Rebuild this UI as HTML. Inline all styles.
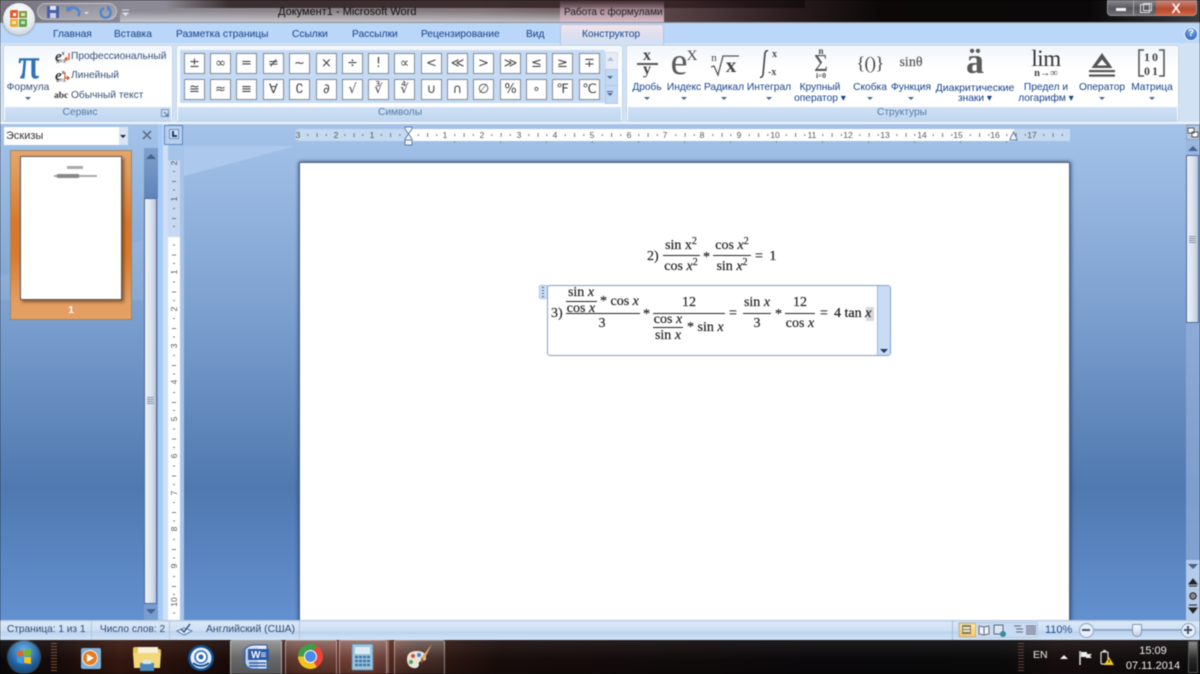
<!DOCTYPE html>
<html lang="ru"><head><meta charset="utf-8"><title>Документ1 - Microsoft Word</title>
<style>
html,body{margin:0;padding:0;background:#000}
#r{position:relative;width:1200px;height:674px;overflow:hidden;font-family:"Liberation Sans","DejaVu Sans",sans-serif;font-size:10.2px;color:#15428b;filter:blur(.45px)}
#r div,#r span,#r svg{position:absolute}
.t{white-space:nowrap;line-height:12px}
.c{white-space:nowrap;line-height:12px;transform:translateX(-50%);text-align:center}
.s{width:19px;height:19px;border:1px solid #7e8a99;background:#fff;text-align:center;line-height:19px;font-size:13px;color:#444;font-family:"DejaVu Sans",sans-serif}
.g{background:linear-gradient(#f1f5fb,#fff 30%);border:1px solid #c3d3e6;border-radius:3px;box-shadow:inset 0 0 0 1px #fff}
.b{background:linear-gradient(#cfe0f4,#c0d7f0);left:1px;right:1px;height:14px;bottom:0}
.a{width:0;height:0;border:3px solid transparent;border-top:3px solid #4a6a92;border-bottom:0}
.m{font-family:"Liberation Serif",serif;font-size:14px;line-height:14px;color:#222;white-space:nowrap;-webkit-text-stroke:.2px #222}
.m i{font-style:italic}
.mc{transform:translateX(-50%);text-align:center}
.l{height:1px;background:#222}
.r{font-size:8.5px;color:#555;line-height:10px;transform:translateX(-50%)}
.v{font-size:8.5px;color:#555;line-height:10px;transform:translate(-50%,-50%) rotate(-90deg);left:174px}
.f{font-family:"Liberation Serif",serif;color:#444;white-space:nowrap;text-align:center;transform:translateX(-50%)}
.tb{top:640px;height:33px;border:1px solid rgba(255,255,255,.42);border-radius:2px;background:linear-gradient(rgba(255,255,255,.28),rgba(255,255,255,.1) 50%,rgba(255,255,255,.04))}
.st{font-size:10.1px;color:#2c4770;top:624px}
</style></head><body>
<div id="r">

<!-- title bar -->
<div style="left:0;top:0;width:1200px;height:23px;background:linear-gradient(90deg,#77757f 0,#8c8a96 130px,#8a8488 300px,#80767a 480px,#6a5458 620px,#2a1c1e 790px,#0c0808 880px,#0a0808 1090px,#3b3b40 1200px)"></div>
<div style="left:165px;top:0;width:640px;height:8px;background:linear-gradient(90deg,rgba(40,25,28,0),rgba(40,25,28,.8) 10%,rgba(50,30,32,.8) 80%,rgba(20,12,14,.9))"></div>
<div style="left:120px;top:11px;width:440px;height:12px;background:linear-gradient(rgba(200,200,205,0),rgba(220,220,225,.8))"></div>
<div style="left:560px;top:0;width:104px;height:23px;background:linear-gradient(rgba(60,35,42,.5),rgba(190,160,172,.75) 45%,rgba(232,205,218,.9))"></div>
<div style="left:37px;top:3px;width:80px;height:17px;border-radius:9px;border:1px solid rgba(255,255,255,.35);background:linear-gradient(rgba(255,255,255,.12),rgba(255,255,255,.3));box-sizing:border-box"></div>
<div class="t" style="left:278px;top:6px;font-size:11px;color:#111">Документ1 - Microsoft Word</div>
<div class="t" style="left:564px;top:7px;font-size:10px;color:#1a1a22">Работа с формулами</div>
<svg style="left:44px;top:3px" width="90" height="18" viewBox="0 0 90 18"><rect x="3" y="3" width="12" height="12" rx="1" fill="#4a5fa8"/><rect x="6" y="3" width="6" height="4" fill="#dfe6f4"/><rect x="6" y="10" width="6" height="5" fill="#c9d3ea"/><path d="M24 6q5-3 9 0t1 7" fill="none" stroke="#4d86d0" stroke-width="2.4"/><path d="M22 3l1 6 5-2z" fill="#4d86d0"/><path d="M40 9h5l-2.500 2.500z" fill="#dde"/><path d="M60 5a5 5 0 1 0 5 1" fill="none" stroke="#4d86d0" stroke-width="2.4"/><path d="M63 2l4 3-4 3z" fill="#4d86d0"/><path d="M78 7h7M79 10h5l-2.500 2.500z" stroke="#dde" fill="#dde"/></svg>
<!-- window controls -->
<div style="left:1107px;top:0;width:90px;height:16px;border:1px solid #999;border-top:0;border-radius:0 0 4px 4px;box-sizing:border-box;background:linear-gradient(#8d8d92,#55555b 55%,#6e6e74)"></div>
<div style="left:1133px;top:0;width:1px;height:15px;background:#aaa"></div>
<div style="left:1156px;top:0;width:40px;height:15px;border-radius:0 0 3px 0;background:linear-gradient(#c88a80,#b64a30 60%,#d8603a)"></div>
<div style="left:1116px;top:8px;width:10px;height:3px;background:#f4f4f4"></div>
<div style="left:1140px;top:4px;width:8px;height:7px;border:1px solid #ddd"></div>
<div style="left:1143px;top:3px;width:7px;height:6px;border:1px solid #ddd"></div>
<div class="c" style="left:1176px;top:1px;font-size:14px;line-height:14px;font-weight:bold;color:#f5f5f5">X</div>

<!-- ribbon -->
<div style="left:0;top:22px;width:1200px;height:1px;background:#8b8f96"></div>
<div style="left:0;top:23px;width:1200px;height:21px;background:#bad6f8"></div>
<div style="left:0;top:43px;width:1200px;height:80px;background:#d2e2f5"></div>
<div style="left:0;top:122px;width:1200px;height:2px;background:#f3f6fb"></div>
<div style="left:560px;top:24px;width:104px;height:21px;border:1px solid #b6c4dc;border-bottom:0;border-radius:3px 3px 0 0;box-sizing:border-box;background:linear-gradient(#f1e4ec,#dadff0 60%,#d0e2f6)"></div>
<div class="t" style="left:53px;top:29px">Главная</div>
<div class="t" style="left:114px;top:29px">Вставка</div>
<div class="t" style="left:176px;top:29px">Разметка страницы</div>
<div class="t" style="left:292px;top:29px">Ссылки</div>
<div class="t" style="left:352px;top:29px">Рассылки</div>
<div class="t" style="left:421px;top:29px">Рецензирование</div>
<div class="t" style="left:526px;top:29px">Вид</div>
<div class="t" style="left:582px;top:29px">Конструктор</div>

<!-- office button -->
<div style="left:3px;top:3px;width:32px;height:32px;border-radius:50%;background:radial-gradient(circle at 50% 35%,#fff,#e9edf2 55%,#b4bcc6);box-shadow:0 0 2px #666"></div>
<svg style="left:8px;top:8px" width="22" height="22" viewBox="0 0 22 22"><path d="M2 4q0-2 2-2h6v8H2z" fill="#e3592a"/><path d="M11 3h8v7h-8z" fill="#7c9a3a"/><path d="M2 11h8v8H4q-2 0-2-2z" fill="#e9a92a"/><path d="M11 11h8v6q0 2-2 2h-6z" fill="#5aa24a"/><rect x="5" y="5" width="3" height="3" fill="#fff"/><rect x="13" y="5" width="4" height="3" fill="#dfe8c0"/><rect x="4" y="13" width="4" height="3" fill="#fbe8b4"/><rect x="13" y="13" width="4" height="3" fill="#cbe6c0"/></svg>
<!-- help -->
<div style="left:1184px;top:27px;width:12px;height:12px;border-radius:50%;background:radial-gradient(circle at 50% 30%,#7ab0ea,#1f55ab);border:1px solid #e8f0fa"></div>
<div class="c" style="left:1191px;top:28px;font-size:10px;font-weight:bold;color:#fff">?</div>

<!-- groups -->
<div class="g" style="left:3px;top:45px;width:168px;height:75px;overflow:hidden"><div class="b"></div></div>
<div class="g" style="left:176px;top:45px;width:445px;height:75px;overflow:hidden"><div class="b"></div></div>
<div class="g" style="left:626px;top:45px;width:551px;height:75px;overflow:hidden"><div class="b"></div></div>
<div class="c" style="left:80px;top:107px;color:#5679a6">Сервис</div>
<div class="c" style="left:400px;top:107px;color:#5679a6">Символы</div>
<div class="c" style="left:902px;top:107px;color:#5679a6">Структуры</div>
<svg style="left:161px;top:109px" width="9" height="9" viewBox="0 0 9 9"><rect x=".5" y=".5" width="7" height="7" fill="none" stroke="#7d95b4"/><path d="M3 3l4 4M4 7h3V4" stroke="#5c7aa0" fill="none"/></svg>

<!-- service -->
<div class="c" style="left:29px;top:46px;font:42px/38px 'Liberation Serif',serif;color:#2d73ba;-webkit-text-stroke:.6px #2d73ba">π</div>
<div class="c" style="left:28px;top:82px;color:#36527a">Формула</div>
<div class="a" style="left:25px;top:97px"></div>
<div class="t" style="left:55px;top:47px;font:italic bold 15px/14px 'Liberation Serif',serif;color:#333">e<span style="position:static;font-size:6px;vertical-align:6px;color:#333">x</span></div>
<div class="t" style="left:56px;top:59px;font:6px/7px 'Liberation Sans',sans-serif;color:#444">a=x</div>
<svg style="left:64px;top:52px" width="7" height="10"><path d="M5 1v6H1M3 5L1 7l2 2" stroke="#d0512a" stroke-width="1.200" fill="none"/></svg>
<div class="t" style="left:55px;top:66px;font:italic bold 15px/14px 'Liberation Serif',serif;color:#333">e<span style="position:static;font-size:6px;vertical-align:6px;color:#333">x</span></div>
<div class="t" style="left:56px;top:78px;font:6px/7px 'Liberation Sans',sans-serif;color:#444">a=x</div>
<svg style="left:64px;top:71px" width="7" height="10"><path d="M1 1v6h4M3 5l2 2-2 2" stroke="#d0512a" stroke-width="1.200" fill="none"/></svg>
<div class="t" style="left:54px;top:90px;font:bold 9.5px/12px 'Liberation Serif',serif;color:#333">abc</div>
<div class="t" style="left:71px;top:51px;color:#36527a;font-size:10.2px">Профессиональный</div>
<div class="t" style="left:71px;top:70px;color:#36527a;font-size:10.2px">Линейный</div>
<div class="t" style="left:71px;top:90px;color:#36527a;font-size:10.2px">Обычный текст</div>

<!-- symbols -->
<div style="left:180px;top:50px;width:425px;height:53px;background:#c6dbf3"></div>
<div class="s" style="left:184px;top:53px">±</div><div class="s" style="left:210px;top:53px">∞</div><div class="s" style="left:236px;top:53px">=</div><div class="s" style="left:263px;top:53px">≠</div><div class="s" style="left:289px;top:53px">~</div><div class="s" style="left:316px;top:53px">×</div><div class="s" style="left:342px;top:53px">÷</div><div class="s" style="left:368px;top:53px">!</div><div class="s" style="left:394px;top:53px">∝</div><div class="s" style="left:421px;top:53px">&lt;</div><div class="s" style="left:447px;top:53px">≪</div><div class="s" style="left:473px;top:53px">&gt;</div><div class="s" style="left:500px;top:53px">≫</div><div class="s" style="left:526px;top:53px">≤</div><div class="s" style="left:552px;top:53px">≥</div><div class="s" style="left:579px;top:53px">∓</div>
<div class="s" style="left:184px;top:79px">≅</div><div class="s" style="left:210px;top:79px">≈</div><div class="s" style="left:236px;top:79px">≡</div><div class="s" style="left:263px;top:79px">∀</div><div class="s" style="left:289px;top:79px">∁</div><div class="s" style="left:316px;top:79px">∂</div><div class="s" style="left:342px;top:79px">√</div><div class="s" style="left:368px;top:79px">∛</div><div class="s" style="left:394px;top:79px">∜</div><div class="s" style="left:421px;top:79px">∪</div><div class="s" style="left:447px;top:79px">∩</div><div class="s" style="left:473px;top:79px">∅</div><div class="s" style="left:500px;top:79px">%</div><div class="s" style="left:526px;top:79px">∘</div><div class="s" style="left:552px;top:79px">℉</div><div class="s" style="left:579px;top:79px">℃</div>
<div style="left:605px;top:52px;width:11px;height:16px;background:#e6edf6;border:1px solid #d4dfec"></div>
<div style="left:605px;top:69px;width:11px;height:15px;background:#c2d9f3;border:1px solid #b0c9e6"></div>
<div style="left:605px;top:85px;width:11px;height:17px;background:#c2d9f3;border:1px solid #b0c9e6"></div>
<div class="a" style="left:607px;top:76px"></div><div style="left:607px;top:91px;width:6px;height:1px;background:#4a6a92"></div><div class="a" style="left:607px;top:93px"></div>
<svg style="left:607px;top:57px" width="7" height="4"><path d="M0 4l3.500-4L7 4z" fill="#b4c0cf"/></svg>

<!-- structures icons -->
<div class="f" style="left:647px;top:48px;font:bold 16px/16px 'Liberation Serif',serif">x</div>
<div style="left:637px;top:63px;width:21px;height:2px;background:#555"></div>
<div class="f" style="left:647px;top:62px;font:bold 16px/16px 'Liberation Serif',serif">y</div>
<div class="f" style="left:679px;top:43px;font:38px/38px 'Liberation Serif',serif;color:#5a5a5a">e</div>
<div class="f" style="left:692px;top:49px;font:15px/15px 'Liberation Serif',serif">X</div>
<div class="f" style="left:714px;top:52px;font:11px/12px 'Liberation Serif',serif">n</div>
<svg style="left:710px;top:53px" width="30" height="24"><path d="M1 14l3-1 4 9 5-19h16" fill="none" stroke="#555" stroke-width="1.300"/></svg>
<div class="f" style="left:731px;top:55px;font:bold 21px/21px 'Liberation Serif',serif">x</div>
<svg style="left:759px;top:49px" width="12" height="30"><path d="M9 2q-2-1-3 2l-1 11-1 11q-1 3-3 2" fill="none" stroke="#444" stroke-width="1.600"/></svg>
<div class="t" style="left:772px;top:49px;font:bold 10px/12px 'Liberation Serif',serif;color:#444">x</div>
<div class="t" style="left:768px;top:67px;font:bold 10px/12px 'Liberation Serif',serif;color:#444">-x</div>
<div class="f" style="left:821px;top:47px;font:bold 9px/9px 'Liberation Serif',serif">n</div>
<div class="f" style="left:821px;top:52px;font:24px/24px 'Liberation Serif',serif;color:#555">Σ</div>
<div class="f" style="left:821px;top:72px;font:bold 7.500px/8px 'Liberation Serif',serif">i=0</div>
<div class="f" style="left:870px;top:53px;font:18px/20px 'Liberation Serif',serif;letter-spacing:-.5px">{()}</div>
<div class="f" style="left:911px;top:55px;font:14px/15px 'Liberation Serif',serif;color:#555;-webkit-text-stroke:.2px #555">sinθ</div>
<div class="f" style="left:975px;top:41px;font:bold 36px/40px 'Liberation Serif',serif;color:#5a5a5a">ä</div>
<div class="f" style="left:1046px;top:47px;font:23px/23px 'Liberation Serif',serif;color:#333;letter-spacing:-.5px">lim</div>
<div class="f" style="left:1046px;top:69px;font:bold 10.500px/10px 'Liberation Serif',serif;color:#444;word-spacing:0">n→∞</div>
<svg style="left:1088px;top:50px" width="28" height="27"><path d="M14 3L3.500 18h21zM14 9.500l-5 6h10z" fill="#555" fill-rule="evenodd"/><rect x="1" y="20" width="26" height="2.200" fill="#555"/><rect x="1" y="24.500" width="26" height="2.200" fill="#555"/></svg>
<svg style="left:1137px;top:49px" width="29" height="29"><path d="M7 1H2v26h5M22 1h5v26h-5" fill="none" stroke="#555" stroke-width="1.600"/></svg>
<div class="f" style="left:1152px;top:50px;font:bold 12px/14px 'Liberation Serif',serif;letter-spacing:2px">10<br>01</div>

<!-- structures labels -->
<div class="c" style="left:647px;top:82px">Дробь</div><div class="a" style="left:644px;top:97px"></div>
<div class="c" style="left:684px;top:82px">Индекс</div><div class="a" style="left:681px;top:97px"></div>
<div class="c" style="left:724px;top:82px">Радикал</div><div class="a" style="left:721px;top:97px"></div>
<div class="c" style="left:769px;top:82px">Интеграл</div><div class="a" style="left:766px;top:97px"></div>
<div class="c" style="left:820px;top:82px">Крупный</div><div class="c" style="left:820px;top:93px">оператор ▾</div>
<div class="c" style="left:870px;top:82px">Скобка</div><div class="a" style="left:867px;top:97px"></div>
<div class="c" style="left:911px;top:82px">Функция</div><div class="a" style="left:908px;top:97px"></div>
<div class="c" style="left:975px;top:82px;font-size:10.5px">Диакритические</div><div class="c" style="left:975px;top:93px">знаки ▾</div>
<div class="c" style="left:1046px;top:82px">Предел и</div><div class="c" style="left:1046px;top:93px">логарифм ▾</div>
<div class="c" style="left:1102px;top:82px">Оператор</div><div class="a" style="left:1099px;top:97px"></div>
<div class="c" style="left:1152px;top:82px">Матрица</div><div class="a" style="left:1149px;top:97px"></div>

<!-- workspace -->
<div style="left:0;top:124px;width:1200px;height:497px;background:linear-gradient(#a5c3e9 0,#9cbce4 40px,#7fa2d1 176px,#5079b0 363px,#6390cf 496px)"></div>
<div style="left:184px;top:146px;width:112px;height:30px;background:#acc8ec;clip-path:polygon(0 0,100% 0,0 100%)"></div>
<div style="left:0;top:240px;width:143px;height:60px;background:rgba(255,255,255,.08);clip-path:polygon(0 60%,100% 0,100% 100%,0 100%)"></div>

<!-- thumbnails pane -->
<div style="left:4px;top:127px;width:124px;height:18px;background:#fff"></div>
<div style="left:119px;top:127px;width:9px;height:18px;background:#d6e4f5"></div>
<div class="t" style="left:6px;top:130px;font-size:11px;color:#333">Эскизы</div>
<div class="a" style="left:120px;top:135px;border-top-color:#222"></div>
<svg style="left:142px;top:130px" width="10" height="10"><path d="M1 1l8 8M9 1l-8 8" stroke="#5c7288" stroke-width="1.600"/></svg>
<div style="left:10px;top:150px;width:122px;height:170px;box-sizing:border-box;border:1px solid #8e8e6a;background:linear-gradient(#e6a56b 0,#e09a5c 14%,#d9772c 42%,#da7a2e 62%,#e39c62 88%,#e6a062)"></div>
<div style="left:20px;top:156px;width:102px;height:144px;background:#fff;border:1px solid #5a5a5a;box-sizing:border-box;box-shadow:2px 2px 3px rgba(70,40,10,.6)"></div>
<div style="left:67px;top:166px;width:16px;height:3px;background:#aaa"></div>
<div style="left:54px;top:175px;width:43px;height:2px;background:#aaa"></div>
<div style="left:57px;top:174px;width:22px;height:4px;background:#888"></div>
<div class="c" style="left:71px;top:304px;font-size:10.500px;font-weight:bold;color:#fff">1</div>

<!-- left scrollbar -->
<div style="left:144px;top:148px;width:14px;height:472px;background:rgba(140,170,210,.55)"></div>
<div style="left:144px;top:148px;width:14px;height:50px;background:linear-gradient(#7ea0cd,#5f84b8)"></div>
<svg style="left:146px;top:153px" width="10" height="6"><path d="M0 6l5-5 5 5z" fill="#44628e"/></svg>
<div style="left:144px;top:198px;width:13px;height:406px;box-sizing:border-box;border:1px solid #4d6a98;background:linear-gradient(90deg,#eef2f7,#dbe2ec 55%,#b9c6da)"></div>
<div style="left:147px;top:397px;width:7px;height:7px;background:repeating-linear-gradient(#8597ad 0 1px,#dbe2ec 1px 2px)"></div>
<svg style="left:146px;top:609px" width="10" height="6"><path d="M0 0l5 5 5-5z" fill="#44628e"/></svg>
<!-- splitter -->
<div style="left:158px;top:124px;width:5px;height:497px;background:#a9ccf6"></div>
<div style="left:163px;top:124px;width:5px;height:497px;background:#cde0f8"></div>
<div style="left:168px;top:124px;width:16px;height:497px;background:#a6c3e8"></div>
<!-- ruler corner -->
<div style="left:164px;top:125px;width:19px;height:20px;box-sizing:border-box;border:1px solid #5c84c0;background:#b7cfee"></div>
<div style="left:169px;top:129px;width:10px;height:10px;box-sizing:border-box;border:1px solid #6d8fc0;background:#d4e3f7"></div>
<div style="left:172px;top:131px;width:2px;height:5px;background:#1c3868"></div><div style="left:172px;top:135px;width:5px;height:2px;background:#1c3868"></div>

<!-- v ruler -->
<div style="left:168px;top:161px;width:12px;height:76px;background:#c6d9f1"></div>
<div style="left:168px;top:237px;width:12px;height:384px;background:#fff"></div>
<div style="left:173px;top:161px;width:2px;height:460px;background:repeating-linear-gradient(#777 0 1px,transparent 1px 18.400px);background-position:0 10px"></div>
<div style="left:172px;top:161px;width:4px;height:460px;background:repeating-linear-gradient(#777 0 1px,transparent 1px 36.800px);background-position:0 20px"></div>
<div class="v" style="top:163px;background:#c6d9f1">2</div><div class="v" style="top:199px;background:#c6d9f1">1</div><div class="v" style="top:272px;background:#fff">1</div><div class="v" style="top:309px;background:#fff">2</div><div class="v" style="top:346px;background:#fff">3</div><div class="v" style="top:382px;background:#fff">4</div><div class="v" style="top:419px;background:#fff">5</div><div class="v" style="top:456px;background:#fff">6</div><div class="v" style="top:493px;background:#fff">7</div><div class="v" style="top:529px;background:#fff">8</div><div class="v" style="top:566px;background:#fff">9</div><div class="v" style="top:602px;background:#fff">10</div>

<!-- h ruler -->
<div style="left:298px;top:129px;width:772px;height:12px;background:#c5d9f1"></div>
<div style="left:408px;top:129px;width:606px;height:12px;background:#fff"></div>
<div style="left:298px;top:134px;width:772px;height:2px;background:repeating-linear-gradient(90deg,#777 0 1px,transparent 1px 18.400px);background-position:9.300px 0"></div>
<div style="left:298px;top:133px;width:772px;height:4px;background:repeating-linear-gradient(90deg,#777 0 1px,transparent 1px 36.800px);background-position:18.600px 0"></div>
<div style="left:454px;top:141px;width:553px;height:2px;background:repeating-linear-gradient(90deg,#789 0 1px,transparent 1px 46px)"></div>
<div class="r" style="left:298px;top:130px;background:#c5d9f1">3</div><div class="r" style="left:336px;top:130px;background:#c5d9f1">2</div><div class="r" style="left:372px;top:130px;background:#c5d9f1">1</div>
<div class="r" style="left:445px;top:130px;background:#fff">1</div><div class="r" style="left:482px;top:130px;background:#fff">2</div><div class="r" style="left:519px;top:130px;background:#fff">3</div><div class="r" style="left:555px;top:130px;background:#fff">4</div><div class="r" style="left:592px;top:130px;background:#fff">5</div><div class="r" style="left:629px;top:130px;background:#fff">6</div><div class="r" style="left:665px;top:130px;background:#fff">7</div><div class="r" style="left:702px;top:130px;background:#fff">8</div><div class="r" style="left:739px;top:130px;background:#fff">9</div><div class="r" style="left:775px;top:130px;background:#fff">10</div><div class="r" style="left:812px;top:130px;background:#fff">11</div><div class="r" style="left:848px;top:130px;background:#fff">12</div><div class="r" style="left:885px;top:130px;background:#fff">13</div><div class="r" style="left:922px;top:130px;background:#fff">14</div><div class="r" style="left:958px;top:130px;background:#fff">15</div><div class="r" style="left:995px;top:130px;background:#fff">16</div><div class="r" style="left:1032px;top:130px;background:#c5d9f1">17</div>
<svg style="left:404px;top:126px" width="10" height="20"><path d="M1 1h7v2L4.500 8 1 3zM4.500 8L8 13v6H1v-6z" fill="#f2f6fb" stroke="#5f7da8"/><path d="M1 14h7" stroke="#5f7da8"/></svg>
<svg style="left:1009px;top:131px" width="9" height="10"><path d="M4.500 1L8 8v1H1V8z" fill="#f2f6fb" stroke="#5f7da8"/></svg>

<!-- page -->
<div style="left:299px;top:162px;width:771px;height:470px;background:#fff;box-sizing:border-box;border-left:1px solid #53627a;border-top:1px solid #53627a;border-right:1px solid #53627a;box-shadow:1px 0 4px rgba(30,50,90,.7),-1px 0 3px rgba(30,50,90,.4)"></div>

<!-- formula 2 -->
<div class="m" style="left:647px;top:250px">2)</div>
<div class="m mc" style="left:681px;top:235px">sin x<span style="position:static;font-size:10px;vertical-align:5px">2</span></div>
<div class="l" style="left:663px;top:255px;width:37px"></div>
<div class="m mc" style="left:681px;top:256px">cos <i>x</i><span style="position:static;font-size:10px;vertical-align:5px">2</span></div>
<div class="m" style="left:703px;top:251px">*</div>
<div class="m mc" style="left:732px;top:235px">cos <i>x</i><span style="position:static;font-size:10px;vertical-align:5px">2</span></div>
<div class="l" style="left:713px;top:255px;width:38px"></div>
<div class="m mc" style="left:732px;top:256px">sin <i>x</i><span style="position:static;font-size:10px;vertical-align:5px">2</span></div>
<div class="m" style="left:755px;top:250px;word-spacing:3px">= 1</div>

<!-- formula 3 box -->
<div style="left:539px;top:285px;width:9px;height:14px;background:#cfe0f5;border:1px solid #a8c2e4;box-sizing:border-box;border-radius:2px 0 0 2px"></div>
<div style="left:542px;top:287px;width:2px;height:10px;background:repeating-linear-gradient(#3c5a88 0 1px,transparent 1px 3px)"></div>
<div style="left:547px;top:285px;width:344px;height:71px;box-sizing:border-box;border:1px solid #7f9fd0;border-radius:3px;background:#fff"></div>
<div style="left:877px;top:286px;width:13px;height:69px;background:#cadcf4;border-left:1px solid #9db8de;box-sizing:border-box"></div>
<div class="a" style="left:880px;top:349px;border-top-color:#1c3868;border-width:4px;border-bottom:0"></div>

<div class="m" style="left:551px;top:307px">3)</div>
<div class="m mc" style="left:581px;top:286px">sin <i>x</i></div>
<div class="l" style="left:566px;top:301px;width:31px"></div>
<div class="m mc" style="left:581px;top:302px">cos <i>x</i></div>
<div class="m" style="left:600px;top:295px">* cos <i>x</i></div>
<div class="l" style="left:566px;top:313px;width:74px"></div>
<div class="m mc" style="left:602px;top:317px">3</div>
<div class="m" style="left:643px;top:308px">*</div>
<div class="m mc" style="left:689px;top:296px">12</div>
<div class="l" style="left:653px;top:313px;width:72px"></div>
<div class="m mc" style="left:668px;top:313px">cos <i>x</i></div>
<div class="l" style="left:653px;top:327px;width:30px"></div>
<div class="m mc" style="left:668px;top:329px">sin <i>x</i></div>
<div class="m" style="left:687px;top:321px">* sin <i>x</i></div>
<div class="m" style="left:729px;top:307px">=</div>
<div class="m mc" style="left:757px;top:296px">sin <i>x</i></div>
<div class="l" style="left:743px;top:313px;width:28px"></div>
<div class="m mc" style="left:757px;top:317px">3</div>
<div class="m" style="left:775px;top:308px">*</div>
<div class="m mc" style="left:800px;top:296px">12</div>
<div class="l" style="left:785px;top:313px;width:30px"></div>
<div class="m mc" style="left:800px;top:317px">cos <i>x</i></div>
<div class="m" style="left:820px;top:307px">=</div>
<div style="left:866px;top:307px;width:8px;height:14px;background:#d8d8d8"></div>
<div class="m" style="left:834px;top:307px">4 tan <i>x</i></div>

<!-- right scrollbar -->
<div style="left:1186px;top:124px;width:14px;height:497px;background:rgba(150,178,218,.65)"></div>
<div style="left:1186px;top:125px;width:14px;height:15px;background:#b9c7da;border:1px solid #90a3bf;box-sizing:border-box"></div>
<svg style="left:1187px;top:126px" width="12" height="13"><path d="M1 2h6v5H1zM5 6h6v5H5z" fill="#fff" stroke="#555"/></svg>
<svg style="left:1188px;top:145px" width="10" height="6"><path d="M0 6l5-5 5 5z" fill="#44628e"/></svg>
<div style="left:1186px;top:155px;width:13px;height:168px;box-sizing:border-box;border:1px solid #4d6a98;background:linear-gradient(90deg,#eef2f7,#dbe2ec 55%,#b9c6da)"></div>
<div style="left:1189px;top:236px;width:7px;height:7px;background:repeating-linear-gradient(#8597ad 0 1px,#dbe2ec 1px 2px)"></div>
<div style="left:1186px;top:560px;width:14px;height:60px;background:#b5cbea"></div>
<svg style="left:1188px;top:564px" width="10" height="6"><path d="M0 0l5 5 5-5z" fill="#44628e"/></svg>
<svg style="left:1188px;top:578px" width="10" height="52"><path d="M1 8h8M5 1L1 6h8z" fill="#222" stroke="#222"/><circle cx="5" cy="18" r="3.200" fill="#888" stroke="#222"/><path d="M1 27h8M5 35l4-5H1z" fill="#222" stroke="#222"/></svg>

<!-- status bar -->
<div style="left:0;top:620px;width:1200px;height:20px;background:linear-gradient(#a9bdd6 0,#dbe7f6 2px,#cfe0f4 50%,#bcd3ef 60%,#d2e3f7)"></div>
<div class="t st" style="left:7px">Страница: 1 из 1</div>
<div class="t st" style="left:100px">Число слов: 2</div>
<div class="t st" style="left:206px;font-size:10.4px">Английский (США)</div>
<div style="left:91px;top:621px;width:1px;height:18px;background:#b1c4dc"></div>
<div style="left:169px;top:621px;width:1px;height:18px;background:#b1c4dc"></div>
<div style="left:299px;top:621px;width:1px;height:18px;background:#b1c4dc"></div>
<svg style="left:176px;top:622px" width="17" height="15"><path d="M1 9l7-3 8 3-8 4z" fill="#eef3fa" stroke="#5a7ca8"/><path d="M5 7l3 3 6-8" fill="none" stroke="#3a5a88" stroke-width="1.500"/></svg>
<div style="left:952px;top:620px;width:1px;height:20px;background:#a9bdd6"></div>
<div style="left:958px;top:622px;width:80px;height:16px;background:#c9dcf3;border-radius:2px;border:1px solid #b6cbe6;box-sizing:border-box"></div>
<div style="left:959px;top:623px;width:17px;height:14px;background:linear-gradient(#fde9a8,#fbc868);border:1px solid #d5b36a;box-sizing:border-box"></div>
<div style="left:962px;top:625px;width:9px;height:9px;background:repeating-linear-gradient(#7a7a6a 0 1px,#f2e6c0 1px 3px);border:1px solid #7a7a6a;box-sizing:border-box"></div>
<svg style="left:977px;top:623px" width="60" height="14"><path d="M2 3l5 1 5-1v8l-5 1-5-1zM7 4v8" fill="#eef3fa" stroke="#667"/><path d="M17 2h9v9h-9z" fill="#dde6f2" stroke="#567"/><circle cx="26" cy="11" r="3" fill="#3a8a9a"/><path d="M37 3h7M39 6h7M39 9h7" stroke="#667"/><path d="M49 3h10M49 5h10M49 7h10M49 9h10M49 11h10" stroke="#667"/></svg>
<div class="t" style="left:1045px;top:624px;font-size:11px;color:#1f4a8a">110%</div>
<div style="left:1079px;top:623px;width:13px;height:13px;border-radius:50%;border:1px solid #8ba2bf;background:#e7eef8"></div>
<div style="left:1082px;top:629px;width:8px;height:2px;background:#3d5578"></div>
<div style="left:1093px;top:629px;width:88px;height:2px;background:#8fa8c8"></div>
<div style="left:1132px;top:624px;width:10px;height:13px;background:linear-gradient(#f7fafd,#c5d4e6);border:1px solid #7d94b2;box-sizing:border-box;border-radius:1px 1px 5px 5px"></div>
<div style="left:1181px;top:623px;width:13px;height:13px;border-radius:50%;border:1px solid #8ba2bf;background:#e7eef8"></div>
<div style="left:1184px;top:629px;width:8px;height:2px;background:#3d5578"></div><div style="left:1187px;top:626px;width:2px;height:8px;background:#3d5578"></div>

<!-- taskbar -->
<div style="left:0;top:640px;width:1200px;height:34px;background:linear-gradient(90deg,#0b0a0c 0,#1a0d0b 60px,#3a1a10 120px,#2a120c 180px,#1a0c0a 230px,#5a2a1e 300px,#70352a 370px,#3a1c14 420px,#1a0e0c 500px,#0c0a0c 800px,#0b0b0c 1000px,#1a0f10 1060px,#0e0c0d 1200px)"></div>
<div style="left:0;top:640px;width:1200px;height:34px;background:linear-gradient(rgba(255,255,255,.07),rgba(0,0,0,.1) 60%,rgba(0,0,0,.25))"></div>
<div style="left:8px;top:641px;width:32px;height:32px;border-radius:50%;background:radial-gradient(circle at 50% 30%,#6fb4e8,#1d5c98 60%,#133a60);box-shadow:0 0 2px #9bc"></div>
<svg style="left:15px;top:648px" width="18" height="18"><path d="M2 4l6-2v6H2z" fill="#e2622a"/><path d="M9 2l7-1v7H9z" fill="#79b52e"/><path d="M2 9h6v7l-6-2z" fill="#3c9ae0"/><path d="M9 9h7v7l-7-1z" fill="#f6c21e"/></svg>
<div style="left:51px;top:643px;width:6px;height:28px;background:repeating-linear-gradient(rgba(160,110,80,.7) 0 1px,transparent 1px 3px)"></div>
<svg style="left:78px;top:646px" width="26" height="25"><rect x="3" y="2" width="20" height="21" rx="2" fill="#7fb0da"/><circle cx="12" cy="12" r="8" fill="#f0f4f6"/><circle cx="12" cy="12" r="7" fill="#e77a1e"/><path d="M9 8l7 4-7 4z" fill="#fff"/></svg>
<svg style="left:131px;top:644px" width="32" height="28"><path d="M2 5q0-2 2-2h7l2 2h15q2 0 2 2v4H2z" fill="#e9c65c"/><rect x="7" y="3" width="20" height="6" fill="#f7f1d8"/><path d="M2 9h28l-1 15H3z" fill="#f2d878"/><rect x="9" y="19" width="14" height="8" fill="#4a86b8"/><rect x="12" y="16" width="8" height="4" fill="#d9e6f0"/></svg>
<svg style="left:187px;top:643px" width="28" height="30"><circle cx="14" cy="15" r="13" fill="#0f4f8f"/><circle cx="14" cy="15" r="10.500" fill="#e9eff6"/><circle cx="14" cy="14" r="6" fill="#fff" stroke="#2a6ab0" stroke-width="1.500"/><circle cx="14" cy="14" r="2.500" fill="#2a6ab0"/><path d="M6 20q8 6 16 0" fill="none" stroke="#0f4f8f" stroke-width="2"/></svg>
<div class="tb" style="left:230px;width:50px;background:linear-gradient(#9a9a9a,#6a6a6a 50%,#555)"></div>
<svg style="left:241px;top:643px" width="30" height="28"><path d="M4 6Q8 2 14 2h12v24H12Q6 26 4 20z" fill="#e8eef7" stroke="#2a5aa8"/><path d="M1 6l16-2v22L1 24z" fill="#2a5aa8" opacity=".2"/><rect x="7" y="6" width="21" height="11" fill="#2a5aa8"/><text x="10" y="15" font-family="Liberation Sans" font-size="10" font-weight="bold" fill="#fff">W≡</text><path d="M8 20h17M8 23h17" stroke="#2a5aa8" stroke-width="1.500"/></svg>
<div class="tb" style="left:285px;width:50px"></div>
<div style="left:298px;top:644px;width:25px;height:25px;border-radius:50%;background:conic-gradient(from 30deg,#e8443a 0 120deg,#f4c21e 120deg 240deg,#3e9e48 240deg 360deg)"></div>
<div style="left:304px;top:650px;width:13px;height:13px;border-radius:50%;background:#4a8ae8;border:1.500px solid #fff;box-sizing:border-box"></div>
<div class="tb" style="left:339px;width:46px"></div>
<div style="left:387px;top:640px;width:2px;height:33px;background:rgba(255,255,255,.25)"></div>
<svg style="left:351px;top:643px" width="24" height="28"><rect x="1" y="1" width="21" height="26" rx="1" fill="#9ec4dc" stroke="#5a88a8"/><rect x="4" y="4" width="15" height="7" fill="#dceaf2"/><path d="M4 14h15M4 18h15M4 22h15" stroke="#3c78a8" stroke-width="2.500" stroke-dasharray="3 1"/></svg>
<div class="tb" style="left:394px;width:49px"></div>
<svg style="left:404px;top:643px" width="30" height="28"><path d="M3 18Q2 8 13 8q9 0 9 7 0 3-4 3t-3 4q-1 4-6 3-5-1-6-7z" fill="#e8e4da"/><circle cx="9" cy="13" r="2" fill="#d84a3a"/><circle cx="15" cy="12" r="2" fill="#3a8ad8"/><circle cx="7" cy="19" r="2" fill="#4aa84a"/><path d="M28 1l-8 16-3-2z" fill="#d8a86a"/><path d="M17 15l3 2-3 4z" fill="#a05a2a"/></svg>

<!-- tray -->
<div style="left:1018px;top:643px;width:6px;height:28px;background:repeating-linear-gradient(rgba(150,100,90,.6) 0 1px,transparent 1px 3px)"></div>
<div class="t" style="left:1033px;top:649px;font-size:10.500px;color:#eee">EN</div>
<svg style="left:1060px;top:654px" width="8" height="5"><path d="M0 5l4-4 4 4z" fill="#f2f2f2"/></svg>
<svg style="left:1078px;top:650px" width="16" height="15"><path d="M2 1v14" stroke="#ddd" stroke-width="1.500"/><path d="M3 2h6v2h5l-2 2 2 2H8V7H3z" fill="#eee"/></svg>
<svg style="left:1100px;top:650px" width="15" height="16"><rect x="1" y="2" width="7" height="12" rx="1" fill="none" stroke="#ddd" stroke-width="1.200"/><rect x="3" y="0" width="3" height="2" fill="#ddd"/><path d="M9 7l5 8H4z" fill="#f4cf20"/><path d="M9 9.500v3" stroke="#222"/></svg>
<div class="c" style="left:1153px;top:645px;font-size:11px;color:#eee">15:09</div>
<div class="c" style="left:1153px;top:660px;font-size:11px;color:#eee">07.11.2014</div>
<div style="left:1188px;top:641px;width:10px;height:32px;box-sizing:border-box;border:1px solid #555;background:linear-gradient(#8c8c8c,#2a2a2a 55%,#111)"></div>
</div>
</body></html>
